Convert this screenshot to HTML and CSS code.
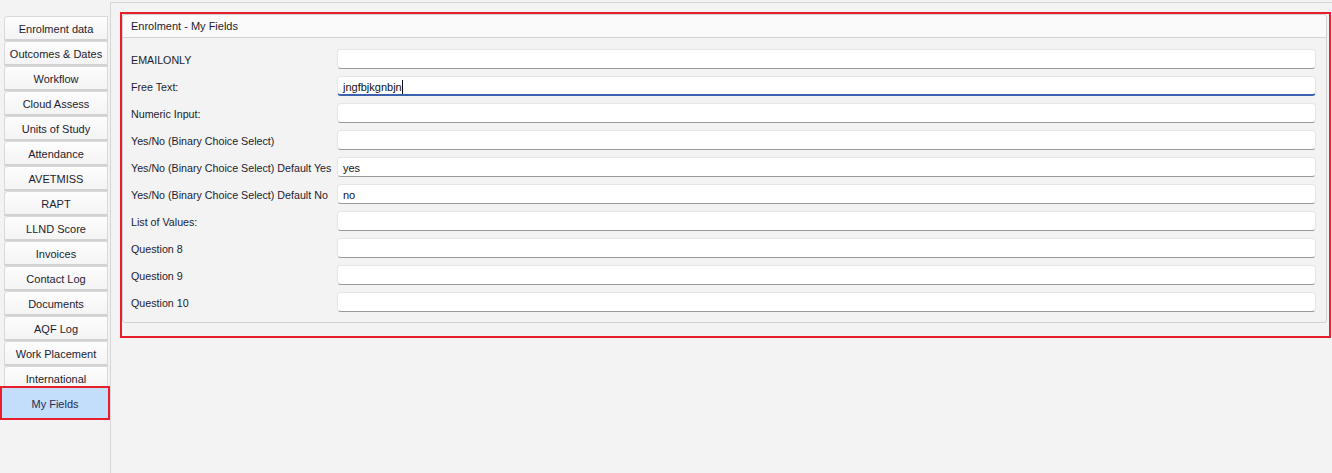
FILE: index.html
```html
<!DOCTYPE html>
<html lang="en">
<head>
  <meta charset="UTF-8" />
  <title>Enrolment - My Fields</title>
  <link rel="stylesheet" href="styles.css">
</head>
<body>
  <div class="app">
    <div class="sidebar">
      <div class="tab">Enrolment data</div>
      <div class="tab">Outcomes &amp; Dates</div>
      <div class="tab">Workflow</div>
      <div class="tab">Cloud Assess</div>
      <div class="tab">Units of Study</div>
      <div class="tab">Attendance</div>
      <div class="tab">AVETMISS</div>
      <div class="tab">RAPT</div>
      <div class="tab">LLND Score</div>
      <div class="tab">Invoices</div>
      <div class="tab">Contact Log</div>
      <div class="tab">Documents</div>
      <div class="tab">AQF Log</div>
      <div class="tab">Work Placement</div>
      <div class="tab">International</div>
      <div class="tab selected">My Fields</div>
    </div>

    <div class="main">
      <div class="highlight">
        <div class="panel">
          <div class="panel-header">Enrolment - My Fields</div>
          <div class="fields">
            <label>EMAILONLY</label>
            <div class="input"></div>
            <label>Free Text:</label>
            <div class="input focused">jngfbjkgnbjn<span class="caret"></span></div>
            <label>Numeric Input:</label>
            <div class="input"></div>
            <label>Yes/No (Binary Choice Select)</label>
            <div class="input"></div>
            <label>Yes/No (Binary Choice Select) Default Yes</label>
            <div class="input">yes</div>
            <label>Yes/No (Binary Choice Select) Default No</label>
            <div class="input">no</div>
            <label>List of Values:</label>
            <div class="input"></div>
            <label>Question 8</label>
            <div class="input"></div>
            <label>Question 9</label>
            <div class="input"></div>
            <label>Question 10</label>
            <div class="input"></div>
          </div>
        </div>
      </div>
    </div>
  </div>
</body>
</html>
```

FILE: styles.css
```css
body {
  margin: 0;
  padding: 0;
  background-color: #f3f3f3;
  font-family: 'Liberation Sans', Arial, sans-serif;
  font-size: 11px;
  color: #1c1c30;
}
.app {
  display: flex;
  height: 473px;
}
.sidebar {
  width: 110px;
  padding-top: 16px;
  flex-shrink: 0;
}
.tab {
  box-sizing: border-box;
  height: 25px;
  margin-left: 4px;
  margin-right: 2px;
  padding-top: 2px;
  border: 1px solid #d9d9d9;
  border-bottom: 2px solid #d2d2d2;
  border-radius: 4px 0 0 0;
  background: linear-gradient(#fdfdfd, #f4f4f4);
  display: flex;
  align-items: center;
  justify-content: center;
  white-space: nowrap;
}
.tab.selected {
  height: 34px;
  margin: -5px 0 0 0;
  padding-top: 1px;
  border: 2px solid #e81e2a;
  border-radius: 0;
  background: #c2defa;
  color: #2a2a55;
}
.main {
  flex: 1;
  margin-top: 2px;
  border-top: 1px solid #d6d6d6;
  border-left: 1px solid #d6d6d6;
  padding: 9px 1px 0 9px;
}
.highlight {
  border: 2px solid #e81e2a;
  padding: 0 2px 13px 0;
}
.panel {
  border: 1px solid #d2d2d2;
  border-radius: 3px;
  background-color: #f3f3f3;
}
.panel-header {
  height: 22px;
  line-height: 23px;
  padding-left: 8px;
  background-color: #fafafa;
  border-bottom: 1px solid #d2d2d2;
  border-radius: 3px 3px 0 0;
}
.fields {
  display: grid;
  grid-template-columns: 206px 1fr;
  row-gap: 7px;
  padding: 11px 10px 10px 8px;
  align-items: center;
}
.fields label {
  white-space: nowrap;
  font-size: 10.7px;
  padding-top: 2px;
}
.input {
  box-sizing: border-box;
  height: 20px;
  background-color: #fff;
  border: 1px solid #e6e6e6;
  border-bottom: 1px solid #9a9a9a;
  border-radius: 4px;
  padding-left: 5px;
  padding-top: 1px;
  display: flex;
  align-items: center;
  color: #111;
}
.input.focused {
  border-bottom: 2px solid #3a62ad;
  padding-top: 2px;
}
.caret {
  display: inline-block;
  width: 1px;
  height: 14px;
  background-color: #111;
}
```
